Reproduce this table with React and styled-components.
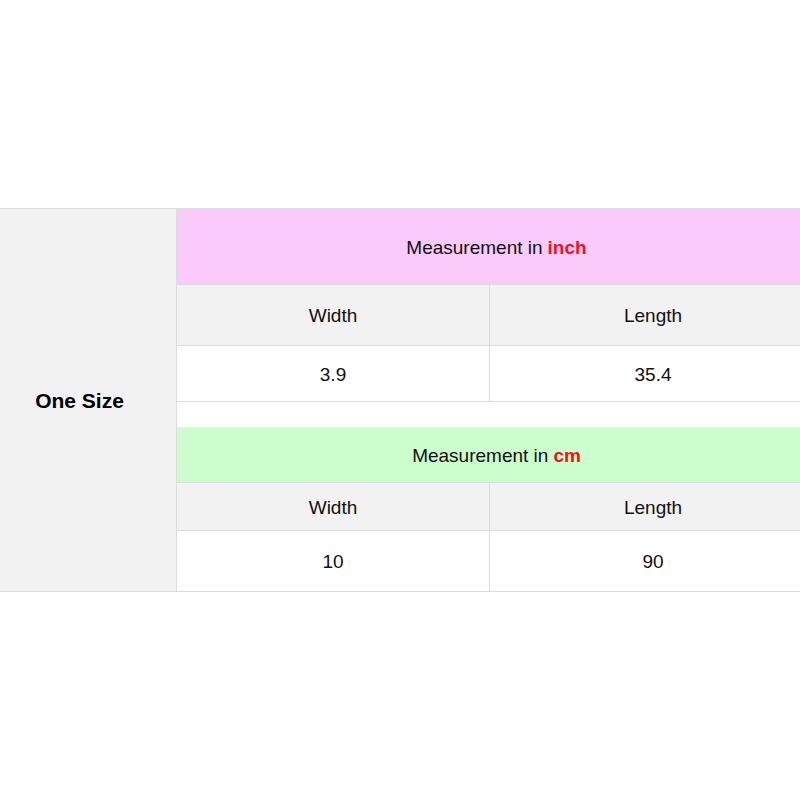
import React from 'react'
import styled, { createGlobalStyle } from 'styled-components'

const Global = createGlobalStyle`
  html, body {
    margin: 0;
    padding: 0;
    background: #fff;
    overflow: hidden;
  }
  body {
    font-family: "Liberation Sans", Arial, sans-serif;
    color: #111;
  }
`

const Page = styled.div`
  width: 816px;
  height: 800px;
  padding-top: 208px;
  box-sizing: border-box;
`

const Table = styled.div`
  display: flex;
  border-top: 1px solid #dcdcdc;
  border-bottom: 1px solid #dcdcdc;
`

const SizeCell = styled.div`
  width: 177px;
  flex-shrink: 0;
  background: #f2f2f2;
  border-right: 1px solid #dcdcdc;
  display: flex;
  align-items: center;
  justify-content: center;
  font-size: 21px;
  font-weight: bold;
  color: #000;
  padding-right: 17px;
  padding-top: 2px;
  box-sizing: border-box;
`

const Blocks = styled.div`
  flex: 1;
  display: flex;
  flex-direction: column;
`

const Header = styled.div`
  height: ${p => p.$h}px;
  background: ${p => p.$bg};
  border-bottom: 1px solid #dcdcdc;
  display: flex;
  align-items: center;
  justify-content: center;
  padding-top: 2px;
  box-sizing: border-box;
  font-size: 19px;
  color: #111;
`

const Unit = styled.span`
  color: #f0101e;
  font-weight: bold;
  margin-left: 5px;
`

const Row = styled.div`
  display: grid;
  grid-template-columns: 312px 1fr;
  height: ${p => p.$h}px;
  background: ${p => (p.$head ? '#f2f2f2' : '#fff')};
  border-bottom: ${p => (p.$last ? 'none' : '1px solid #dcdcdc')};
`

const Cell = styled.div`
  display: flex;
  align-items: center;
  justify-content: center;
  padding-top: 2px;
  font-size: 19px;
  color: #111;
  & + & {
    border-left: 1px solid #dcdcdc;
  }
`

const Spacer = styled.div`
  height: 25px;
  background: #fff;
`

function Block({ unit, bg, headH, subH, valH, values, last }) {
  return (
    <>
      <Header $h={headH + 1} $bg={bg}>
        Measurement in<Unit>{unit}</Unit>
      </Header>
      <Row $h={subH} $head>
        <Cell>Width</Cell>
        <Cell>Length</Cell>
      </Row>
      <Row $h={valH} $last={last}>
        <Cell>{values[0]}</Cell>
        <Cell>{values[1]}</Cell>
      </Row>
    </>
  )
}

export default function App() {
  return (
    <>
      <Global />
      <Page>
        <Table>
          <SizeCell>One Size</SizeCell>
          <Blocks>
            <Block unit="inch" bg="#facbfa" headH={75} subH={60} valH={55} values={['3.9', '35.4']} />
            <Spacer />
            <Block unit="cm" bg="#ccfdcc" headH={55} subH={47} valH={60} values={['10', '90']} last />
          </Blocks>
        </Table>
      </Page>
    </>
  )
}
